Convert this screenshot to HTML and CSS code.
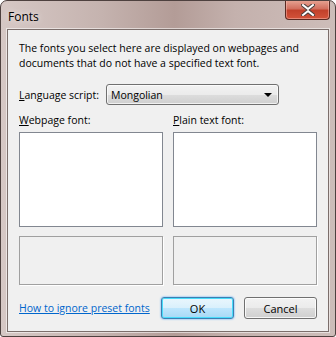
FILE: index.html
```html
<!DOCTYPE html>
<html lang="en">
<head>
    <meta charset="UTF-8">
    <title>Fonts</title>
    <link rel="stylesheet" href="styles.css">
</head>
<body>

    <div class="window">
        <div class="titlebar">
            <span class="title">Fonts</span>
            <button class="close" title="Close">
                <svg width="14" height="12" viewBox="0 0 14 12">
                    <path d="M2 1 L7 5 L12 1 M2 11 L7 7 L12 11" fill="none" stroke="#4c3f3d" stroke-width="4" stroke-linecap="square"/>
                    <path d="M2 1 L7 5 L12 1 M2 11 L7 7 L12 11" fill="none" stroke="#fff" stroke-width="2" stroke-linecap="square"/>
                </svg>
            </button>
        </div>

        <div class="client">
            <p class="intro">The fonts you select here are displayed on webpages and<br>documents that do not have a specified text font.</p>

            <div class="script-row">
                <label for="script"><u>L</u>anguage script:</label>
                <div class="combo" id="script">
                    <span>Mongolian</span>
                    <span class="arrow"></span>
                </div>
            </div>

            <div class="columns">
                <div class="column">
                    <div class="label"><u>W</u>ebpage font:</div>
                    <div class="listbox"></div>
                    <div class="preview"></div>
                </div>
                <div class="column">
                    <div class="label"><u>P</u>lain text font:</div>
                    <div class="listbox"></div>
                    <div class="preview"></div>
                </div>
            </div>

            <div class="footer">
                <a href="#" class="help">How to ignore preset fonts</a>
                <div class="buttons">
                    <button class="btn default">OK</button>
                    <button class="btn">Cancel</button>
                </div>
            </div>
        </div>
    </div>

</body>
</html>
```

FILE: styles.css
```css
body {
    margin: 0;
    font-family: "Open Sans", "Noto Sans", sans-serif;
    font-size: 10.5px;
    color: #000;
    background: #fff;
}
.window {
    width: 336px;
    height: 337px;
    box-sizing: border-box;
    border: 1px solid #4e413f;
    border-radius: 7px 7px 3px 3px;
    background: linear-gradient(90deg, #d6c8c5 0%, #c5b3af 30%, #b39c97 52%, #c4b1ad 70%, #cdbdb9 100%);
    padding: 0 6px 4px 6px;
    display: flex;
    flex-direction: column;
    overflow: hidden;
}
.titlebar {
    height: 28px;
    display: flex;
    justify-content: space-between;
    align-items: flex-start;
}
.title {
    margin: 7px 0 0 1px;
    font-size: 12px;
    color: #000;
    text-shadow: 0 0 6px rgba(255, 255, 255, 0.9);
}
.close {
    width: 45px;
    height: 20px;
    margin: -1px -1px 0 0;
    padding: 0;
    border: 1px solid #5a2a22;
    border-top: none;
    border-radius: 0 0 4px 4px;
    background: linear-gradient(180deg, #e8a696 0%, #d2705f 45%, #c2412b 55%, #d3533a 100%);
    box-shadow: inset 0 0 0 1px rgba(255, 200, 190, 0.45);
    display: flex;
    justify-content: center;
    align-items: center;
}
.client {
    flex: 1;
    background: #f0f0f0;
    border: 1px solid #7b6e6b;
    box-shadow: 0 0 0 1px rgba(255, 255, 255, 0.55);
    padding: 11px 11px 0 11px;
    display: flex;
    flex-direction: column;
}
.intro {
    margin: 0;
    line-height: 15px;
    white-space: nowrap;
}
.script-row {
    display: flex;
    align-items: center;
    margin-top: 13px;
    height: 21px;
}
.script-row label {
    width: 87px;
}
.combo {
    width: 161px;
    height: 19px;
    border: 1px solid #707070;
    border-radius: 3px;
    background: linear-gradient(180deg, #f2f2f2 0%, #ebebeb 50%, #dddddd 50%, #cfcfcf 100%);
    box-shadow: inset 0 0 0 1px rgba(255, 255, 255, 0.7);
    display: flex;
    align-items: center;
    justify-content: space-between;
    padding: 0 6px 0 4px;
    box-sizing: content-box;
}
.arrow {
    width: 0;
    height: 0;
    border-left: 4px solid transparent;
    border-right: 4px solid transparent;
    border-top: 4px solid #000;
}
.columns {
    display: flex;
    gap: 10px;
    margin-top: 8px;
}
.column {
    width: 145px;
    display: flex;
    flex-direction: column;
}
.label {
    height: 15px;
    line-height: 15px;
    margin-bottom: 4px;
}
.listbox {
    height: 93px;
    border: 1px solid #828790;
    background: #fff;
}
.preview {
    height: 47px;
    margin-top: 9px;
    border: 1px solid #a0a0a0;
    box-shadow: 1px 1px 0 #fff;
}
.footer {
    display: flex;
    justify-content: space-between;
    align-items: center;
    margin-top: 12px;
}
.help {
    color: #0066cc;
    text-decoration: underline;
}
.buttons {
    display: flex;
    gap: 10px;
}
.btn {
    width: 73px;
    height: 22px;
    font-family: inherit;
    font-size: 11px;
    color: #000;
    border: 1px solid #707070;
    border-radius: 3px;
    background: linear-gradient(180deg, #f2f2f2 0%, #ebebeb 50%, #dddddd 50%, #cfcfcf 100%);
    box-shadow: inset 0 0 0 1px rgba(255, 255, 255, 0.8);
    padding: 0;
}
.btn.default {
    border-color: #3c7fb1;
    background: linear-gradient(180deg, #eaf6fd 0%, #d9f0fc 50%, #bee6fd 50%, #a7d9f5 100%);
    box-shadow: inset 0 0 0 1px #48dcfb, 0 0 2px #3399ff;
}
```
